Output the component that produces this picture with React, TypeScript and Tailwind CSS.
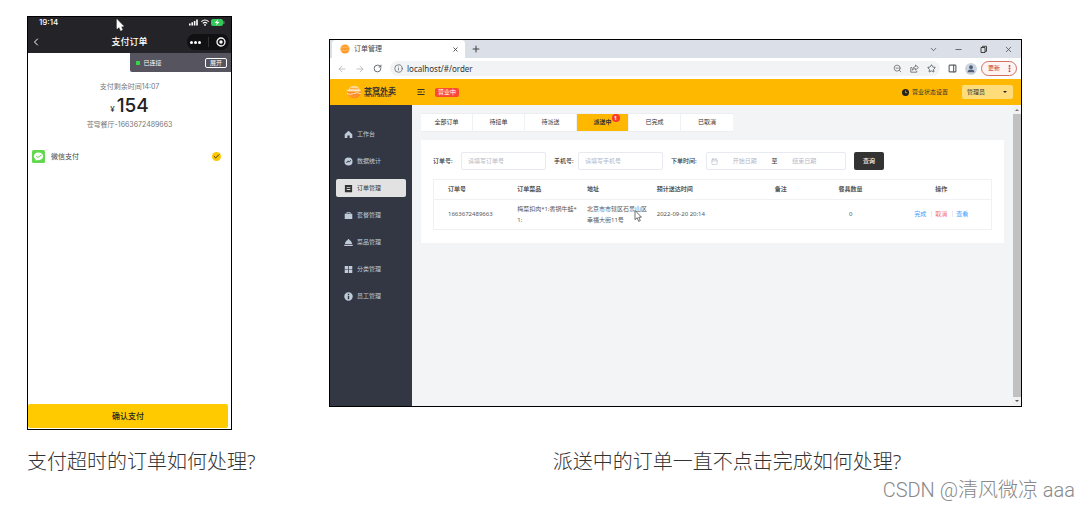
import { useState } from "react";
import clsx from "clsx";
import {
  ArrowLeft,
  ArrowRight,
  Calendar,
  Check,
  ChevronDown,
  ChevronLeft,
  Info,
  Minus,
  MoreVertical,
  PanelRight,
  Plus,
  RotateCw,
  Star,
  X,
  ZoomOut,
} from "lucide-react";

const FONT = "font-['Noto_Sans','Noto_Sans_CJK_SC',sans-serif]";

function Cursor({ className, fill, stroke }: { className: string; fill: string; stroke: string }) {
  return (
    <svg viewBox="0 0 8 12" className={clsx("absolute w-2 h-3", className)} aria-hidden="true">
      <path d="M1 .5v9.2l2.2-2 1.5 3.7 1.6-.7-1.5-3.5h2.7z" fill={fill} stroke={stroke} strokeWidth=".7" />
    </svg>
  );
}

function StatusIcons() {
  return (
    <svg viewBox="0 0 37 9" className="w-[37px] h-[9px]" aria-hidden="true">
      <g fill="#fff">
        <rect x="1" y="5.5" width="1.6" height="2" />
        <rect x="3.4" y="4.3" width="1.6" height="3.2" />
        <rect x="5.8" y="3" width="1.6" height="4.5" />
        <rect x="8.2" y="1.5" width="1.6" height="6" />
      </g>
      <g fill="none" stroke="#fff" strokeWidth="1.1">
        <path d="M13.3 3.7Q17 .4 20.7 3.7M14.8 5.3Q17 3.4 19.2 5.3" />
      </g>
      <circle cx="17" cy="6.9" r=".9" fill="#fff" />
      <rect x="23" y="1" width="12" height="7" rx="2" fill="#34c759" />
      <rect x="35.4" y="3" width="1" height="3" rx=".5" fill="#8f8f93" />
      <path d="M29.8 1.5 26.8 5h2l-.6 2.5L31.4 4h-2z" fill="#fff" />
    </svg>
  );
}

function Phone() {
  return (
    <section
      className={clsx(
        "relative flex flex-col min-h-[414px] border border-black bg-white text-[7px] leading-[10px] text-[#777]",
        "font-['Inter','Noto_Sans_CJK_SC',sans-serif]"
      )}
    >
      <header className="bg-[#242327] text-white">
        <div className="flex items-center justify-between h-2.5 pl-[11px] pr-1.5">
          <span className="text-[8px] font-medium">19:14</span>
          <StatusIcons />
        </div>
        <div className="grid grid-cols-[1fr_auto_1fr] items-center h-[26px] pt-1 pl-0.5 pr-0.5">
          <button aria-label="返回" className="justify-self-start">
            <ChevronLeft className="w-3 h-3" />
          </button>
          <h1 className="text-[9px] font-medium">支付订单</h1>
          <div className="flex items-center justify-around justify-self-end w-[42px] h-4 rounded-full bg-[#111013]">
            <button aria-label="更多" className="flex items-center gap-px">
              <span className="w-[3px] h-[3px] rounded-full bg-white" />
              <span className="w-[3px] h-[3px] rounded-full bg-white" />
              <span className="w-[3px] h-[3px] rounded-full bg-white" />
            </button>
            <span className="w-px h-2.5 bg-[#333]" />
            <button aria-label="关闭">
              <svg viewBox="0 0 10 10" className="w-2.5 h-2.5">
                <circle cx="5" cy="5" r="4" fill="none" stroke="#fff" strokeWidth="1.3" />
                <circle cx="5" cy="5" r="1.7" fill="#fff" />
              </svg>
            </button>
          </div>
        </div>
      </header>

      <div className="flex items-center self-end w-1/2 h-[19px] pl-1.5 pr-1 rounded-bl-xs bg-[#55545f] text-[6px] text-white">
        <span className="w-1 h-1 bg-[#35d24a]" />
        <span className="ml-1 flex-1">已连接</span>
        <button className="h-[10px] px-1 leading-[8px] border border-white rounded-xs">展开</button>
      </div>

      <div className="mt-2.5 text-center">
        <p>支付剩余时间14:07</p>
        <p className="flex items-baseline justify-center gap-0.5 h-5 my-1 leading-5 text-[#222]">
          <span className="text-[8px]">¥</span>
          <strong className="text-[19px] font-medium">154</strong>
        </p>
        <p>苍穹餐厅-1663672489663</p>
      </div>

      <label className="flex items-center mt-5 pl-1 pr-2.5">
        <svg viewBox="0 0 13 13" className="w-[13px] h-[13px]" aria-hidden="true">
          <rect width="13" height="13" rx="1.5" fill="#62d84e" />
          <path d="M6.5 2.4c2.6 0 4.6 1.7 4.6 3.9s-2 3.9-4.6 3.9c-.5 0-1 0-1.4-.2l-1.6.8.3-1.4C2.7 8.7 1.9 7.6 1.9 6.300c0-2.200 2-3.900 4.600-3.900z" fill="#fff" />
          <path d="m4.3 6.2 1.600 1.300 3.600-2.600" fill="none" stroke="#62d84e" strokeWidth="1" />
        </svg>
        <span className="ml-1.5 flex-1 text-[#444]">微信支付</span>
        <input type="radio" name="pay" defaultChecked className="sr-only" />
        <span className="flex items-center justify-center w-[9px] h-[9px] rounded-full bg-[#ffc700] text-[#222]">
          <Check className="w-[7px] h-[7px]" strokeWidth={3} />
        </span>
      </label>

      <button className="mt-auto mb-px mr-[3px] h-6 rounded-xs bg-[#ffcb00] text-[8px] font-medium text-[#222]">
        确认支付
      </button>
      <Cursor className="left-[88px] top-0.5" fill="#fff" stroke="#fff" />
    </section>
  );
}

function TabStrip() {
  return (
    <div className="flex items-center h-[18px] pl-0.5 bg-[#dbdfe8] text-[#444]">
      <div className="flex items-center w-[133px] h-full pl-2 pr-1.5 bg-white rounded-t-sm text-[7px]">
        <svg viewBox="0 0 10 10" className="w-2.5 h-2.5" aria-hidden="true">
          <circle cx="5" cy="5" r="4.6" fill="#ff9c2b" />
          <path d="M.8 3.2h8.4M.6 5.8Q5 7.800 9.400 5.800" fill="none" stroke="#ffc26e" strokeWidth=".7" />
        </svg>
        <span className="ml-1 flex-1">订单管理</span>
        <button aria-label="关闭标签页">
          <X className="w-[7px] h-[7px]" strokeWidth={3} />
        </button>
      </div>
      <button aria-label="新标签页" className="ml-1.5">
        <Plus className="w-2.5 h-2.5" strokeWidth={2.5} />
      </button>
      <div className="flex items-center gap-4 ml-auto pr-2">
        <ChevronDown className="w-[9px] h-[9px]" />
        <Minus className="w-[9px] h-[9px]" />
        <svg viewBox="0 0 9 9" className="w-[9px] h-[9px]" fill="none" stroke="#333" aria-hidden="true">
          <path d="M2 2.5h4v5H2zM3.5 2.5v-1.200h4v5H6" strokeWidth=".9" />
        </svg>
        <X className="w-[9px] h-[9px]" />
      </div>
    </div>
  );
}

function AddressBar() {
  return (
    <div className="flex items-center h-[21px] pl-[7px] pr-1 bg-white text-[#5f6368]">
      <ArrowLeft className="w-2.5 h-2.5 text-[#b4b6b9]" />
      <ArrowRight className="w-2.5 h-2.5 ml-2 text-[#b4b6b9]" />
      <RotateCw className="w-[9px] h-[9px] ml-2" strokeWidth={2.5} />
      <div className="flex items-center flex-1 h-[15px] ml-2 px-1 rounded-full bg-[#f1f3f4]">
        <Info className="w-[9px] h-[9px]" />
        <input
          aria-label="地址"
          defaultValue="localhost/#/order"
          className="flex-1 min-w-0 ml-1 bg-transparent text-[8px] text-[#333] outline-none"
        />
        <ZoomOut className="w-[9px] h-[9px]" />
        <svg viewBox="0 0 9 9" className="w-[9px] h-[9px] ml-2" fill="none" stroke="currentColor" strokeWidth=".8" aria-hidden="true">
          <path d="M2.2 3.600H.8v4.600h6V6.700" />
          <path d="M5.500 1 8.400 3.500 5.500 6V4.600Q3.400 4.500 2.300 6.200 2.600 3 5.500 2.500z" strokeLinejoin="round" />
        </svg>
        <Star className="w-[9px] h-[9px] ml-2" strokeWidth={2.5} />
      </div>
      <PanelRight className="w-[9px] h-[9px] ml-2" strokeWidth={3} />
      <span className="flex items-end justify-center w-3 h-3 ml-2 rounded-full bg-[#ccd3df]">
        <svg viewBox="0 0 12 12" className="w-3 h-3" fill="#4d5d78" aria-hidden="true">
          <circle cx="6" cy="4.200" r="1.900" />
          <path d="M2.600 9.300c0-2 1.700-2.700 3.400-2.700s3.400.7 3.400 2.700z" />
        </svg>
      </span>
      <button className="flex items-center justify-between w-9 h-[15px] ml-1 pl-1.5 pr-0.5 border border-[#d0705f] rounded-full bg-[#fdf4f3] text-[6px] text-[#c5392b]">
        更新
        <MoreVertical className="w-[9px] h-[9px]" strokeWidth={3} />
      </button>
    </div>
  );
}

function AppHeader() {
  return (
    <header className="flex items-center h-[26px] pl-4 pr-2 bg-[#ffb800] text-[6px] text-[#333]">
      <svg viewBox="0 0 16 14" className="w-4 h-3.5" aria-hidden="true">
        <path d="M1.500 6.500h13.500c0 4-2.800 6.700-6.700 6.700S1.500 10.500 1.500 6.500z" fill="#ff8a24" />
        <path d="M3 3.400Q5 .6 8.200.8q3.800.2 5 3l1.300 2.700H1.800z" fill="#ffd795" />
        <path d="M.6 5.300h14M.8 8.300q3.400 2 6.700.3t7.400 0" fill="none" stroke="#ffeccb" strokeWidth=".9" />
        <path d="M4 3.700h8M2.300 10.500q4.700 1.600 9 .3" fill="none" stroke="#ff9d3b" strokeWidth=".9" />
      </svg>
      <div className="ml-0.5">
        <div className="text-[8px] leading-[9px] font-bold">苍穹外卖</div>
        <div className="text-[3px] leading-[3px] font-bold">THE SKY TAKE-OUT</div>
      </div>
      <button aria-label="折叠菜单" className="ml-[21px]">
        <svg viewBox="0 0 8 8" className="w-2 h-2" stroke="#333" aria-hidden="true">
          <path d="M.5 1.500h7M.5 4h4.500M.5 6.500h7" />
          <path d="M7.500 3v2L6 4z" fill="#333" stroke="none" />
        </svg>
      </button>
      <span className="ml-2.5 px-[3px] leading-[9px] rounded-xs bg-[#fb4a32] text-white">营业中</span>
      <button className="flex items-center ml-auto gap-[3px]">
        <svg viewBox="0 0 7 7" className="w-[7px] h-[7px]" aria-hidden="true">
          <circle cx="3.500" cy="3.500" r="3.500" fill="#222" />
          <path d="M3.500 1.500v2.200h1.700" fill="none" stroke="#ffb800" strokeWidth=".7" />
        </svg>
        营业状态设置
      </button>
      <label className="relative flex ml-3.5">
        <span className="sr-only">账号</span>
        <select className="appearance-none w-[51px] h-3.5 pl-[5px] rounded-xs bg-[#ffdc7a] text-[6px] leading-3.5">
          <option>管理员</option>
        </select>
        <span className="absolute right-1.5 top-1.5 border-x-2 border-t-2 border-x-transparent border-t-[#222]" />
      </label>
    </header>
  );
}

const MENU = [
  { label: "工作台", icon: <path d="M5 .8 9.200 4.600V9H6.300V6.200H3.700V9H.8V4.600z" /> },
  {
    label: "数据统计",
    icon: <path fillRule="evenodd" d="M5 .5a4.500 4.500 0 1 1 0 9 4.500 4.500 0 0 1 0-9zM2.300 6l.7.7 1.600-1.400 1 .9 2.300-2.200-.6-.7-1.700 1.600-1-.9z" />,
  },
  { label: "订单管理", icon: <path fillRule="evenodd" d="M1 1h8v8.200H1zM3 3.200v1h4v-1zM3 5.600v1h4v-1z" /> },
  { label: "套餐管理", icon: <path fillRule="evenodd" d="M.8 3h2V1.500h4.400V3h2v6H.8zM3.700 2.300V3h2.600v-.7z" /> },
  { label: "菜品管理", icon: <path d="M4.300 1h1.400v1.200C7.700 2.600 8.700 4.500 9 6.800H1c.3-2.300 1.300-4.200 3.300-4.600zM.3 7.500h9.400V9H.3z" /> },
  { label: "分类管理", icon: <path d="M.8 1h3.800v3.600H.8zM5.400 1h3.800v3.600H5.400zM.8 5.400h3.800V9H.8zM5.400 5.400h3.800V9H5.400z" /> },
  {
    label: "员工管理",
    icon: <path fillRule="evenodd" d="M5 .3a4.700 4.700 0 1 1 0 9.400A4.700 4.700 0 0 1 5 .3zM4.200 2v1.400h1.600V2zM4.200 4.200V8h1.600V4.200z" />,
  },
];

function Sidebar() {
  return (
    <nav className="flex flex-col gap-[9px] w-[82px] shrink-0 px-1.5 pt-5 bg-[#333744]">
      {MENU.map((m) => {
        const active = m.label === "订单管理";
        return (
          <a
            key={m.label}
            href="#/order"
            className={clsx(
              "flex items-center h-[18px] pl-2 gap-1 rounded-xs text-[6px]",
              active ? "bg-[#e2e2e2] text-[#333]" : "text-[#bfcbd9]"
            )}
          >
            <svg viewBox="0 0 10 10" className="w-[9px] h-[9px]" fill="currentColor" aria-hidden="true">
              {m.icon}
            </svg>
            {m.label}
          </a>
        );
      })}
    </nav>
  );
}

const TABS = ["全部订单", "待接单", "待派送", "派送中", "已完成", "已取消"];

function StatusTabs() {
  const [current, setCurrent] = useState("派送中");
  return (
    <div className="flex self-start border-y border-[#eceef2] bg-white">
      {TABS.map((tab) => (
        <button
          key={tab}
          onClick={() => setCurrent(tab)}
          className={clsx(
            "w-[52px] h-[17px] border-r border-[#f0f1f4] last:border-r-0",
            tab === current && "bg-[#ffb800] font-bold"
          )}
        >
          <span className="relative">
            {tab}
            {tab === "派送中" && (
              <span className="absolute left-full -top-1 w-2 h-2 rounded-full bg-[#fb3a2e] text-[5px] leading-2 text-white">
                1
              </span>
            )}
          </span>
        </button>
      ))}
    </div>
  );
}

function Filters() {
  const box = "h-[18px] border border-[#e8eaef] rounded-xs bg-white";
  const field = "min-w-0 bg-transparent placeholder:text-[#b4b8c8] outline-none";
  return (
    <form className="flex items-center" onSubmit={(e) => e.preventDefault()}>
      <label htmlFor="order-no" className="w-7 font-medium">订单号:</label>
      <input id="order-no" placeholder="请填写订单号" className={clsx(box, field, "w-[85px] px-1.5")} />
      <label htmlFor="phone-no" className="w-6 ml-2 font-medium">手机号:</label>
      <input id="phone-no" placeholder="请填写手机号" className={clsx(box, field, "w-[85px] px-1.5")} />
      <label htmlFor="date-from" className="w-[35px] ml-2 font-medium">下单时间:</label>
      <div className={clsx(box, "flex items-center w-[140px] px-1")}>
        <Calendar className="w-[7px] h-[7px] text-[#b4b8c8]" />
        <input id="date-from" placeholder="开始日期" className={clsx(field, "flex-1 text-center")} />
        <span>至</span>
        <input aria-label="结束日期" placeholder="结束日期" className={clsx(field, "flex-1 text-center")} />
        <span className="w-2.5" />
      </div>
      <button className="w-[30px] h-[18px] ml-2 rounded-xs bg-[#333] font-medium text-white">查询</button>
    </form>
  );
}

function OrderTable() {
  return (
    <table className="w-full mt-[9px] table-fixed border border-[#f0f1f4] text-left">
      <colgroup>
        <col className="w-[12.5%]" />
        <col className="w-[12.5%]" />
        <col className="w-[12.5%]" />
        <col className="w-[18.5%]" />
        <col className="w-[12.5%]" />
        <col className="w-[12.5%]" />
        <col className="w-[19%]" />
      </colgroup>
      <thead>
        <tr className="h-5 border-b border-[#f0f1f4] text-[#555] [&>th]:font-bold">
          <th className="pl-3.5">订单号</th>
          <th className="pl-3.5">订单菜品</th>
          <th className="pl-3.5">地址</th>
          <th className="pl-3.5">预计送达时间</th>
          <th className="text-center">备注</th>
          <th className="text-center">餐具数量</th>
          <th className="pl-1.5 text-center">操作</th>
        </tr>
      </thead>
      <tbody>
        <tr className="h-[30px] leading-[11px] text-[#555]">
          <td className="pl-3.5">1663672489663</td>
          <td className="pl-3.5 whitespace-nowrap">
            梅菜扣肉*1;香锅牛蛙*
            <br />
            1;
          </td>
          <td className="pl-3.5 whitespace-nowrap">
            北京市市辖区石景山区
            <br />
            幸福大街11号
          </td>
          <td className="pl-3.5">2022-09-20 20:14</td>
          <td />
          <td className="text-center">0</td>
          <td className="pl-1.5 text-center whitespace-nowrap">
            <button className="pr-[5px] text-[#409eff]">完成</button>
            <button className="pl-[3px] pr-[5px] border-x border-[#e8eaef] leading-[6px] text-[#f56c6c]">取消</button>
            <button className="pl-[3px] text-[#409eff]">查看</button>
          </td>
        </tr>
      </tbody>
    </table>
  );
}

function Scrollbar() {
  return (
    <div className="flex flex-col items-center justify-between w-2 shrink-0 py-1 bg-[#f1f1f1]" aria-hidden="true">
      <span className="border-x-2 border-b-2 border-x-transparent border-b-[#777]" />
      <span className="flex-1 w-full my-[3px] bg-[#c1c1c1]" />
      <span className="border-x-2 border-t-2 border-x-transparent border-t-[#555]" />
    </div>
  );
}

function Browser() {
  return (
    <section className={clsx("relative flex flex-col min-h-[368px] border border-black", FONT)}>
      <TabStrip />
      <AddressBar />
      <AppHeader />
      <div className="flex flex-1">
        <Sidebar />
        <main className="flex flex-col flex-1 min-w-0 px-[9px] pt-2 bg-[#f3f4f6] text-[6px] text-[#333]">
          <StatusTabs />
          <div className="mt-2 px-3 pt-3 pb-[13px] bg-white">
            <Filters />
            <OrderTable />
          </div>
        </main>
        <Scrollbar />
      </div>
      <Cursor className="left-[304px] top-[170px]" fill="#fff" stroke="#333" />
    </section>
  );
}

export default function App() {
  return (
    <div className={clsx("bg-white text-[#333]", FONT)}>
      <div className="flex items-end gap-[97px] pl-[27px] pr-[67px] pt-4">
        <figure className="w-[205px] shrink-0">
          <Phone />
          <figcaption className="mt-5 text-[20px] leading-6 font-light whitespace-nowrap">
            支付超时的订单如何处理?
          </figcaption>
        </figure>
        <figure className="flex-1 min-w-0">
          <Browser />
          <figcaption className="mt-[43px] pl-[103px] text-center text-[20px] leading-6 font-light">
            派送中的订单一直不点击完成如何处理?
          </figcaption>
        </figure>
      </div>
      <p className="mt-1 pr-3.5 text-right text-[20px] leading-6 font-light text-[#888] font-['Roboto','Noto_Sans_CJK_SC',sans-serif]">
        CSDN @清风微凉 aaa
      </p>
    </div>
  );
}
